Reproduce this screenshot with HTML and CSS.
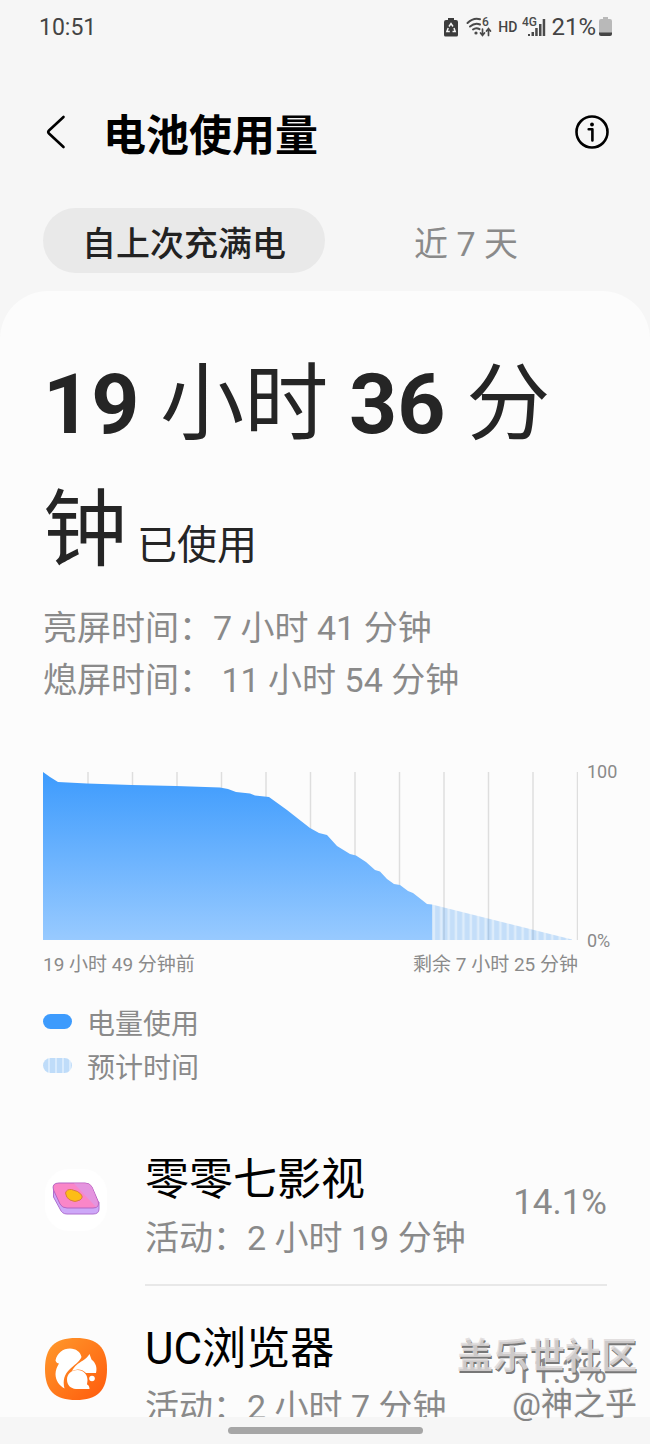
FILE: index.html
```html
<!DOCTYPE html>
<html lang="zh-CN">
<head>
<meta charset="UTF-8">
<meta name="viewport" content="width=device-width, initial-scale=1">
<title>电池使用量</title>

<link rel="stylesheet" href="styles.css">

</head>
<body>
	<div class="screen">

		<!-- status bar -->
		<div class="statusbar">
			<span class="clock">10:51</span>
			<div class="status-icons">
				<svg width="14" height="20" viewBox="0 0 14 20">
					<path d="M4 1h6v2h2a2 2 0 0 1 2 2v13a1.500 1.500 0 0 1-1.500 1.500h-11A1.500 1.500 0 0 1 0 18V5a2 2 0 0 1 2-2h2z" fill="#3c3c3c"/>
					<path d="M5 9.500 7 6.500l2 3M10 11l1.200 3.500H8.500M5.800 14.500H2.900L4.200 11" fill="none" stroke="#f6f6f6" stroke-width="1.500"/>
				</svg>
				<svg class="wifi" width="27" height="22" viewBox="0 0 27 22">
					<g fill="none" stroke="#4a4a4a" stroke-width="2" stroke-linecap="round">
						<path d="M1.500 7C6 2.600 10 2 14 3.200M4 10.500c3.500-3 7-3.500 10-2M7 13.500c2-1.600 4.500-1.600 6.500-.3"/>
						<path d="M16.500 13v6M14.500 17l2 2.500 2-2.500M22.500 19.500V13M20.500 15l2-2.500 2 2.500" stroke-width="1.700"/>
					</g>
					<circle cx="10" cy="17" r="1.600" fill="#4a4a4a"/>
					<text x="16" y="10" class="tiny">6</text>
				</svg>
				<span class="hd">HD</span>
				<svg class="signal" width="24" height="22" viewBox="0 0 24 22">
					<text x="0" y="10" class="tiny">4G</text>
					<g fill="#4a4a4a">
						<rect x="6" y="18" width="2" height="2"/>
						<rect x="9.500" y="16" width="2.500" height="4"/>
						<rect x="13.200" y="12" width="2.500" height="8"/>
						<rect x="17" y="8" width="2.500" height="12"/>
						<rect x="20.700" y="3" width="2.500" height="17"/>
					</g>
				</svg>
				<span class="percent">21%</span>
				<svg width="13" height="20" viewBox="0 0 13 20">
					<path d="M4 0h5v2h2a2 2 0 0 1 2 2v12H0V4a2 2 0 0 1 2-2h2z" fill="#b9b9b9"/>
					<path d="M0 15.500h13V17a2 2 0 0 1-2 2H2a2 2 0 0 1-2-2z" fill="#444"/>
				</svg>
			</div>
		</div>

		<!-- title -->
		<header class="header">
			<button class="icon-button" aria-label="返回">
				<svg width="24" height="36" viewBox="0 0 24 36">
					<path d="M20.500 3 6 16.500q-1.500 1.500 0 3L20.500 33" fill="none" stroke="#000" stroke-width="2.600" stroke-linecap="round"/>
				</svg>
			</button>
			<h1 class="title">电池使用量</h1>
			<button class="icon-button" aria-label="信息">
				<svg width="34" height="34" viewBox="0 0 34 34">
					<circle cx="17" cy="17" r="15.500" fill="none" stroke="#000" stroke-width="2.600"/>
					<circle cx="17" cy="9.500" r="1.900"/>
					<path d="M13.700 14.300h3.700V25.500" fill="none" stroke="#000" stroke-width="2.600" stroke-linecap="round" stroke-linejoin="round"/>
				</svg>
			</button>
		</header>

		<nav class="tabs">
			<button class="tab active">自上次充满电</button>
			<button class="tab">近 7 天</button>
		</nav>

		<main class="panel">
			<p class="total"><b>19</b> 小时 <b>36</b> 分钟<span class="used"> 已使用</span></p>
			<p class="detail">亮屏时间：7 小时 41 分钟</p>
			<p class="detail">熄屏时间： 11 小时 54 分钟</p>

			<!-- battery level chart -->
			<div class="chart">
				<svg class="plot" viewBox="0 0 535 169">
					<defs>
						<linearGradient id="level" x1="0" y1="0" x2="0" y2="1">
							<stop offset="0" stop-color="#3d9bfd"/>
							<stop offset="1" stop-color="#98caff"/>
						</linearGradient>
						<pattern id="stripes" width="7.400" height="169" patternUnits="userSpaceOnUse" x="390">
							<rect width="7.400" height="169" fill="#3d9bfd" opacity=".16"/>
							<rect x="2" width="5" height="169" fill="#3d8fe8" opacity=".16"/>
						</pattern>
					</defs>
					<path d="M45 0v168M89.500 0v168M134 0v168M178.500 0v168M223 0v168M267.500 0v168M312 0v168M356.500 0v168M401 0v168M445.500 0v168M490 0v168M534.500 0v168" stroke="#dedede" stroke-width="1.500"/>
					<path d="M0 0 7 5 15 10 44 11.500 89 13 133 14 177 15.500 185 17 193 20 207 21.500 212 23.500 226 25 244 38 258 49 267 56 276 61 284 63 294 74 307 82 313 83.500 323 90 332 98 337 99.500 344 107 351 112 357 113 365 119 370 121 379 128 384 132 389 132.500V168H0z" fill="url(#level)"/>
					<path d="M389 132.500 529 167.500V168H389z" fill="url(#stripes)"/>
				</svg>
				<div class="scale">
					<span>100</span>
					<span>0%</span>
				</div>
				<div class="range">
					<span>19 小时 49 分钟前</span>
					<span>剩余 7 小时 25 分钟</span>
				</div>
			</div>

			<ul class="legend">
				<li><span class="swatch"></span>电量使用</li>
				<li><span class="swatch striped"></span>预计时间</li>
			</ul>

			<!-- apps -->
			<ul class="apps">
				<li class="app">
					<svg class="app-icon" width="62" height="62" viewBox="0 0 62 62">
						<rect width="62" height="62" rx="24" fill="#fff"/>
						<path d="M8.500 20v8l6.500 12q2 5 7 5h26q6 0 6-5v-7z" fill="#cda8f8" stroke="#b070d0"/>
						<path d="M14 14h26q5 0 7 4l6 14q2 7-5 7H22q-5 0-7-4L8.500 21q-2-7 5.500-7z" fill="#fa86c8" stroke="#b565c4"/>
						<path d="M29 14.500h11q5 0 7 4l5.500 14q1 4-1.500 5.500z" fill="#e494df"/>
						<path d="M20.500 24q1-4 6-3.500l6 2q8 5 2.500 8.500-5 3-10 0-4-2-4.500-7z" fill="#fdbd16" stroke="#d97a48"/>
					</svg>
					<div class="app-body">
						<h2 class="app-name">零零七影视</h2>
						<p class="app-time">活动：2 小时 19 分钟</p>
						<span class="app-percent">14.1%</span>
					</div>
				</li>
				<li class="app">
					<svg class="app-icon" width="62" height="62" viewBox="0 0 62 62">
						<defs>
							<linearGradient id="uc" x1="0" y1="0" x2="1" y2="1">
								<stop offset="0" stop-color="#ff9a2c"/>
								<stop offset="1" stop-color="#ff5a0c"/>
							</linearGradient>
						</defs>
						<path d="M31 0C52 0 62 9 62 31S52 62 31 62 0 53 0 31 10 0 31 0z" fill="url(#uc)"/>
						<!-- tail, head, body -->
						<path d="M10.500 22.500C12 15 18 10.500 25 10.500c6 0 10.500 3.500 11.500 8.500-2 5-7 7.500-11.500 12-5.500 5-7.500 11-5.500 19.500C14 47.500 10.500 42 10.500 36c0-4 1.500-7 3.500-10.500-1.500 0-3-1-3.500-3z" fill="#fff"/>
						<path d="M44.500 16l2 5.500c4 3 6 8 4.500 13.500H41c-4-4-9-4.500-14-2 2.500-5 6-7.500 11-10.500 3-2 5-4 6.500-6.500z" fill="#fff"/>
						<path d="M32.500 32c6 0 10 4.500 10 10 0 2-.5 3-.5 4.500 1.500.5 2.500 2 2.500 4.500H31c-5.500-.5-9-4-9-9.500 0-5.500 4.500-9.500 10.500-9.500z" fill="#fff"/>
						<circle cx="47" cy="40.500" r="2.800" fill="#fff"/>
					</svg>
					<div class="app-body">
						<h2 class="app-name">UC浏览器</h2>
						<p class="app-time">活动：2 小时 7 分钟</p>
						<span class="app-percent">11.3%</span>
					</div>
				</li>
			</ul>
		</main>

		<footer class="navbar"><span class="handle"></span></footer>

		<!-- community mark, sits over the list -->
		<div class="mark">
			<span class="mark-site">盖乐世社区</span>
			<span class="mark-user">@神之乎</span>
		</div>
	</div>
</body>
</html>
```
FILE: styles.css
```css
* {
	box-sizing: border-box;
}

body {
	margin: 0;
	background-color: #f6f6f6;
	color: #000;
	font-family: Roboto, "Noto Sans CJK SC", sans-serif;
}

h1, h2, p, ul {
	margin: 0;
	padding: 0;
	font-weight: normal;
}

ul {
	list-style: none;
}

button {
	border: 0;
	padding: 0;
	background: none;
	font-family: inherit;
	cursor: pointer;
}

svg {
	display: block;
	flex-shrink: 0;
}

.screen {
	position: relative; /* holds the mark */
	display: flex;
	flex-direction: column;
	height: 100vh;
	overflow: hidden;
}

/* status bar */
.statusbar {
	display: flex;
	justify-content: space-between;
	align-items: center;
	height: 54px;
	padding: 0 38px 0 39px;
	font-size: 24px;
	color: #444;
}

.clock {
	font-size: 23px;
}

.status-icons {
	display: flex;
	align-items: center;
	gap: 8px;
}

.percent {
	margin-right: -5px;
}

.hd {
	font-size: 14px;
	font-weight: 500;
	margin-left: -3px;
}

.signal {
	margin: 0 -3px;
}

.tiny {
	font-size: 12px;
	font-weight: 500;
	fill: #4a4a4a;
}

/* title */
.header {
	display: flex;
	align-items: center;
	height: 154px;
	padding: 2px 41px 0 43px;
}

.icon-button {
	display: flex;
}

.title {
	flex: 1;
	margin-left: 36px;
	padding-top: 8px;
	font-size: 43px;
	font-weight: bold;
	line-height: 54px;
}

/* tabs */
.tabs {
	display: grid;
	grid-template-columns: 1fr 1fr;
	flex-shrink: 0;
	height: 65px;
	margin: 0 43px 18px;
}

.tab {
	padding-top: 2px;
	border-radius: 33px;
	font-size: 34px;
	color: #8a8a8a;
}

.tab.active {
	background-color: #e9e9e9;
	color: #222;
	font-weight: 500;
}

/* white card */
.panel {
	flex: 1;
	min-height: 0;
	overflow: hidden; /* the list is cut by the bottom bar */
	padding: 51px 43px 0;
	border-radius: 48px 48px 0 0;
	background-color: #fcfcfc;
}

.total {
	font-size: 84px;
	line-height: 126px;
	color: #252525;
}

.total b {
	font-weight: bold;
}

.used {
	font-size: 40px;
	line-height: 1;
}

.detail {
	font-size: 34px;
	line-height: 52px;
	color: #8a8a8a;
}

.total + .detail {
	margin-top: 8px;
}

/* chart */
.chart {
	display: grid;
	grid-template-columns: 1fr 30px;
	column-gap: 9px;
	margin-top: 66px;
	margin-right: -10px;
	font-size: 18px;
	line-height: 20px;
	color: #8a8a8a;
}

.plot {
	width: 100%;
}

.scale {
	display: flex;
	flex-direction: column;
	justify-content: space-between;
	margin: -10px 0;
}

.range {
	display: flex;
	justify-content: space-between;
	margin-top: 14px;
	font-size: 19px;
}

/* legend */
.legend {
	margin-top: 28px;
	font-size: 28px;
	line-height: 44px;
	color: #8a8a8a;
}

.legend li {
	display: flex;
	align-items: center;
	gap: 15px;
}

.swatch {
	width: 29px;
	height: 15px;
	margin-bottom: 8px;
	border-radius: 8px;
	background-color: #3d9bfd;
}

.striped {
	background: repeating-linear-gradient(90deg, #bfdcf9 0, #bfdcf9 5px, #d9ebfd 5px, #d9ebfd 7px);
}

/* apps */
.apps {
	margin-top: 57px;
}

.app {
	display: flex;
	gap: 38px;
}

.app-icon {
	margin: 21px 0 0 2px;
}

.app-body {
	flex: 1;
	display: grid;
	grid-template-columns: 1fr auto;
	align-content: start;
	align-items: center;
	min-height: 136px;
}

.app + .app .app-body {
	border-top: 2px solid #e8e8e8;
	padding-top: 31px;
}

.app + .app .app-icon {
	margin-top: 54px;
}

.app-name {
	grid-column: 1;
	font-size: 44px;
	line-height: 64px;
}

.app-time {
	grid-column: 1;
	font-size: 34px;
	line-height: 52px;
	color: #8a8a8a;
}

.app-percent {
	grid-column: 2;
	grid-row: 1 / 3;
	padding-bottom: 8px;
	font-size: 35px;
	color: #8a8a8a;
}

/* gesture bar */
.navbar {
	display: flex;
	justify-content: center;
	align-items: center;
	flex-shrink: 0;
	height: 27px;
	background-color: #f6f6f6;
}

.handle {
	width: 30%;
	height: 7px;
	border-radius: 4px;
	background-color: #a6a6a6;
}

.mark {
	position: absolute;
	right: 13px;
	bottom: 16px;
	display: flex;
	flex-direction: column;
	align-items: flex-end;
	line-height: 47px;
}

.mark-site {
	font-size: 36px;
	font-weight: bold;
	color: rgba(222, 218, 218, 0.85);
	text-shadow: 1px 2px 0 #777;
}

.mark-user {
	font-size: 32px;
	color: #858585;
	text-shadow: -1px -1px 0 #eee;
}
```
